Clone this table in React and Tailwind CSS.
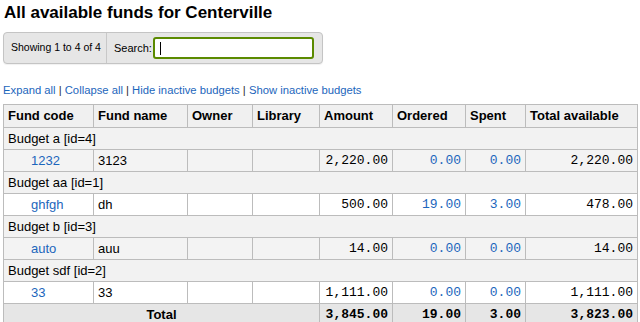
import React from "react";

const rows = [
  { budget: "Budget a [id=4]", code: "1232", name: "3123", amount: "2,220.00", ordered: "0.00", spent: "0.00", total: "2,220.00", alt: true },
  { budget: "Budget aa [id=1]", code: "ghfgh", name: "dh", amount: "500.00", ordered: "19.00", spent: "3.00", total: "478.00", alt: false },
  { budget: "Budget b [id=3]", code: "auto", name: "auu", amount: "14.00", ordered: "0.00", spent: "0.00", total: "14.00", alt: true },
  { budget: "Budget sdf [id=2]", code: "33", name: "33", amount: "1,111.00", ordered: "0.00", spent: "0.00", total: "1,111.00", alt: false },
];

const sans = "font-['Liberation_Sans',Arial,sans-serif]";
const mono = "font-['Liberation_Mono','Courier_New',monospace]";
const cell = "border border-[#bcbcbc] px-[4px] py-[3px] leading-[15px]";
const num = `${cell} ${mono} text-right`;

export default function App() {
  return (
    <div className={`${sans} text-[13px] text-black bg-white min-h-[322px] px-[3px] overflow-hidden`}>
      <h1 className="text-[17px] leading-[20px] font-bold pt-[3px] pl-[1px]">
        All available funds for Centerville
      </h1>

      <div className="mt-[9px] w-[320px] h-[32px] flex items-stretch rounded-[4px] border border-[#c4c4c4] bg-[#e6e6e6] shadow-[0_1px_1px_rgba(0,0,0,0.06)]">
        <div className="w-[103px] flex items-center pl-[7px] text-[10.5px] border-r border-[#c8c8c8]">
          Showing 1 to 4 of 4
        </div>
        <div className="flex items-center pl-[7px] text-[11px]">
          <span>Search:</span>
          <div className="relative ml-[1px] w-[161px] h-[22px] rounded-[3px] border-2 border-[#5b8a00] bg-white">
            <span className="absolute left-[5px] top-[3px] w-px h-[13px] bg-black"></span>
          </div>
        </div>
      </div>

      <div className="mt-[20px] text-[11.25px] leading-[13px] text-[#333]">
        <a className="text-[#1c66bc]">Expand all</a> |{" "}
        <a className="text-[#1c66bc]">Collapse all</a> |{" "}
        <a className="text-[#1c66bc]">Hide inactive budgets</a> |{" "}
        <a className="text-[#1c66bc]">Show inactive budgets</a>
      </div>

      <table className="mt-[7px] w-[635px] table-fixed border-collapse">
        <colgroup>
          <col className="w-[90px]" />
          <col className="w-[94px]" />
          <col className="w-[65px]" />
          <col className="w-[67px]" />
          <col className="w-[73px]" />
          <col className="w-[73px]" />
          <col className="w-[60px]" />
          <col className="w-[112px]" />
        </colgroup>
        <thead>
          <tr className="bg-[#f0f0f0] text-left">
            {["Fund code", "Fund name", "Owner", "Library", "Amount", "Ordered", "Spent", "Total available"].map((h) => (
              <th key={h} className={`${cell} pt-[3px] pb-[4px] font-bold whitespace-nowrap`}>
                {h}
              </th>
            ))}
          </tr>
        </thead>
        <tbody>
          {rows.map((r) => (
            <React.Fragment key={r.budget}>
              <tr className="bg-[#f2f2f2]">
                <td colSpan={8} className={cell}>
                  {r.budget}
                </td>
              </tr>
              <tr className={r.alt ? "bg-[#f3f3f3]" : "bg-white"}>
                <td className={`${cell} pl-[27px]`}>
                  <a className="text-[#1c66bc]">{r.code}</a>
                </td>
                <td className={cell}>{r.name}</td>
                <td className={cell}></td>
                <td className={cell}></td>
                <td className={num}>{r.amount}</td>
                <td className={`${num} text-[#1c66bc]`}>{r.ordered}</td>
                <td className={`${num} text-[#1c66bc]`}>{r.spent}</td>
                <td className={num}>{r.total}</td>
              </tr>
            </React.Fragment>
          ))}
          <tr className="bg-[#e6e6e6] font-bold">
            <td colSpan={4} className={`${cell} text-center`}>
              Total
            </td>
            <td className={num}>3,845.00</td>
            <td className={num}>19.00</td>
            <td className={num}>3.00</td>
            <td className={num}>3,823.00</td>
          </tr>
        </tbody>
      </table>
    </div>
  );
}
